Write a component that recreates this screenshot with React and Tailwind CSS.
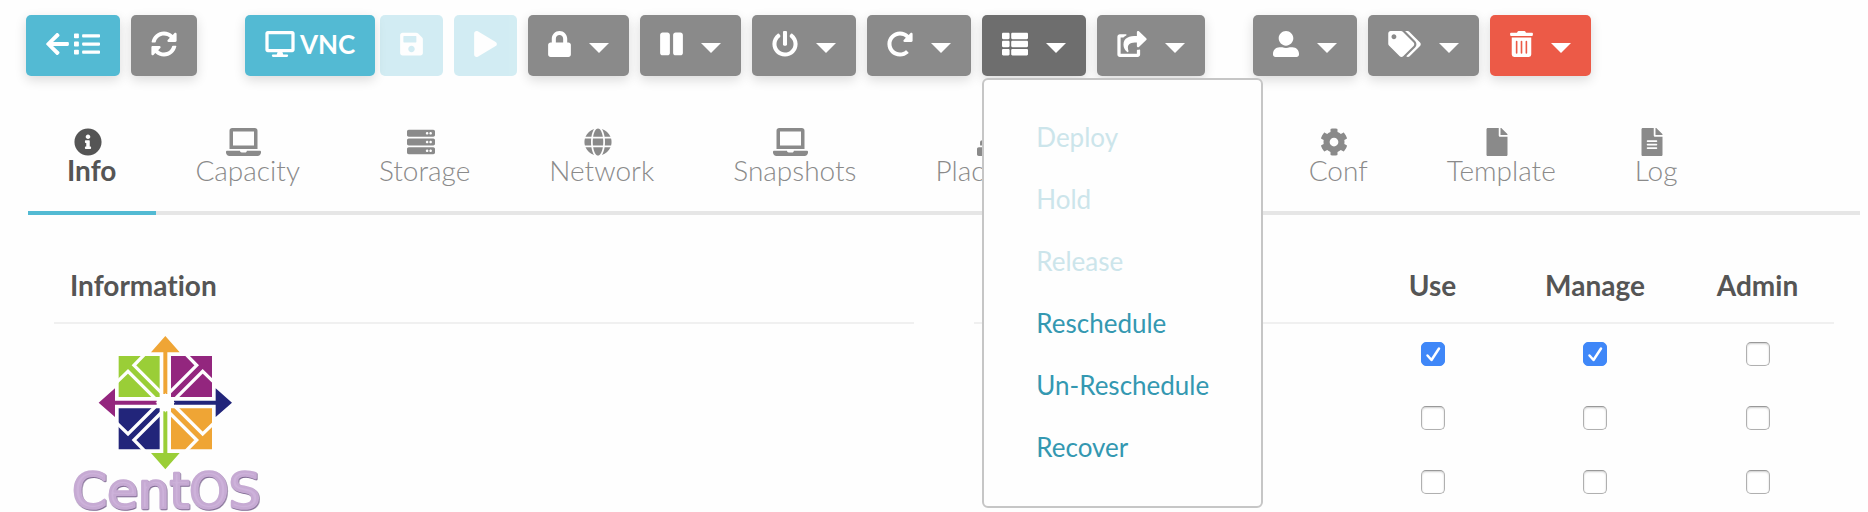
import React, { useState } from 'react';
import {
  FaArrowLeft,
  FaCog,
  FaDesktop,
  FaFile,
  FaFileAlt,
  FaGlobe,
  FaInfoCircle,
  FaLaptop,
  FaList,
  FaLock,
  FaPause,
  FaPlay,
  FaPowerOff,
  FaRedoAlt,
  FaSave,
  FaServer,
  FaShareSquare,
  FaSitemap,
  FaSyncAlt,
  FaTags,
  FaThList,
  FaTrashAlt,
  FaUserAlt,
} from 'react-icons/fa';

const TABS = [
  { id: 'info', label: 'Info', icon: FaInfoCircle },
  { id: 'capacity', label: 'Capacity', icon: FaLaptop, iconWidth: 'w-[35px]' },
  { id: 'storage', label: 'Storage', icon: FaServer },
  { id: 'network', label: 'Network', icon: FaGlobe },
  { id: 'snapshots', label: 'Snapshots', icon: FaLaptop, iconWidth: 'w-[35px]' },
  { id: 'placement', label: 'Placement', icon: FaSitemap, iconWidth: 'w-[35px]' },
  { id: 'actions', label: 'Actions', icon: FaList },
  { id: 'conf', label: 'Conf', icon: FaCog },
  { id: 'template', label: 'Template', icon: FaFile },
  { id: 'log', label: 'Log', icon: FaFileAlt },
];

const SCHEDULE_ACTIONS = [
  { label: 'Deploy', disabled: true },
  { label: 'Hold', disabled: true },
  { label: 'Release', disabled: true },
  { label: 'Reschedule' },
  { label: 'Un-Reschedule' },
  { label: 'Recover' },
];

const RIGHTS = ['Use', 'Manage', 'Admin'];

const App = () => {
  const [activeTab, setActiveTab] = useState('info');
  const [menuOpen, setMenuOpen] = useState(true);
  const [permissions, setPermissions] = useState({
    Owner: { Use: true, Manage: true, Admin: false },
    Group: { Use: false, Manage: false, Admin: false },
    Other: { Use: false, Manage: false, Admin: false },
  });

  const togglePermission = (who, right) => {
    setPermissions(prev => ({
      ...prev,
      [who]: { ...prev[who], [right]: !prev[who][right] },
    }));
  };

  return (
    <div className="bg-[#fefefe] min-h-screen font-['Lato',sans-serif] text-[#555] [font-variant-ligatures:none]">

      {/* TOOLBAR */}
      <header className="flex gap-12 pt-[15px] pl-[26px]">
        <div className="flex gap-[11px]">
          <ToolButton label="Back to list" color="primary">
            <span className="flex gap-[5px]">
              <FaArrowLeft className="h-[26px] w-[23px]" />
              <FaList className="h-[26px] w-[26px]" />
            </span>
          </ToolButton>
          <ToolButton label="Refresh" icon={FaSyncAlt} />
        </div>

        <div className="flex gap-[11px]">
          <div className="flex gap-[5px]">
            <ToolButton color="primary">
              <span className="flex gap-[5px] text-[26px] leading-[26px] font-bold">
                <FaDesktop className="h-[26px] w-[30px]" /> VNC
              </span>
            </ToolButton>
            <ToolButton label="Save" icon={FaSave} iconWidth="w-[23px]" color="primary" disabled />
          </div>
          <ToolButton label="Start" icon={FaPlay} iconWidth="w-[23px]" color="primary" disabled />
          <ToolButton label="Lock" icon={FaLock} iconWidth="w-[23px]" dropdown />
          <ToolButton label="Suspend" icon={FaPause} iconWidth="w-[23px]" dropdown />
          <ToolButton label="Power off" icon={FaPowerOff} dropdown />
          <ToolButton label="Reboot" icon={FaRedoAlt} dropdown />
          <div className="relative">
            <ToolButton
              label="Schedule"
              icon={FaThList}
              color={menuOpen ? 'pressed' : 'secondary'}
              dropdown
              onClick={() => setMenuOpen(!menuOpen)}
            />
            {menuOpen && (
              <ul className="absolute top-full left-0 z-10 mt-0.5 rounded-md border-2 border-[#c6c6c6] bg-[#fefefe] px-[52px] pt-[26px] pb-7">
                {SCHEDULE_ACTIONS.map(action => (
                  <li key={action.label}>
                    <button
                      type="button"
                      disabled={action.disabled}
                      className="block h-[62px] text-[26px] whitespace-nowrap text-[#3498b1] disabled:text-[#cce5eb]"
                    >
                      {action.label}
                    </button>
                  </li>
                ))}
              </ul>
            )}
          </div>
          <ToolButton label="Migrate" icon={FaShareSquare} iconWidth="w-[30px]" dropdown />
        </div>

        <div className="flex gap-[11px]">
          <ToolButton label="Owner" icon={FaUserAlt} dropdown />
          <ToolButton label="Labels" icon={FaTags} iconWidth="w-[33px]" dropdown />
          <ToolButton label="Terminate" icon={FaTrashAlt} iconWidth="w-[23px]" color="alert" dropdown />
        </div>
      </header>

      <main className="mt-[52px] mr-2 ml-7">
        {/* TABS */}
        <nav className="flex border-b-4 border-[#e6e6e6]">
          {TABS.map(tab => (
            <TabItem
              key={tab.id}
              icon={tab.icon}
              iconWidth={tab.iconWidth}
              label={tab.label}
              active={activeTab === tab.id}
              onClick={() => setActiveTab(tab.id)}
            />
          ))}
        </nav>

        {/* PANELS */}
        <div className="grid grid-cols-2 gap-[60px] px-[26px] pt-[35px]">
          <section>
            <h2 className="border-b-2 border-[#f0f0f0] px-4 pt-[21px] pb-[23px] text-[28px] leading-[28px] font-bold">
              Information
            </h2>
            <div className="px-4 pt-[11px]">
              <CentosLogo />
            </div>
          </section>

          <table className="w-full table-fixed border-separate border-spacing-0 self-start text-[28px] leading-[28px]">
            <thead>
              <tr>
                <th className="border-b-2 border-[#f0f0f0] px-4 pt-[21px] pb-[23px] text-left">Permissions</th>
                <th className="w-[153px] border-b-2 border-[#f0f0f0] pt-[21px] pb-[23px]">Use</th>
                <th className="w-[172px] border-b-2 border-[#f0f0f0] pt-[21px] pb-[23px]">Manage</th>
                <th className="w-[153px] border-b-2 border-[#f0f0f0] pt-[21px] pb-[23px]">Admin</th>
              </tr>
            </thead>
            <tbody>
              {Object.keys(permissions).map(who => (
                <tr key={who}>
                  <th className="px-4 text-left font-normal">{who}</th>
                  {RIGHTS.map(right => (
                    <td key={right} className="h-16 pb-1">
                      <Checkbox
                        label={`${who} ${right}`}
                        checked={permissions[who][right]}
                        onChange={() => togglePermission(who, right)}
                      />
                    </td>
                  ))}
                </tr>
              ))}
            </tbody>
          </table>
        </div>
      </main>
    </div>
  );
};

// --- SUB COMPONENTS ---

const BUTTON_COLORS = {
  primary: 'bg-[#53bad3]',
  secondary: 'bg-[#8a8a8a]',
  pressed: 'bg-[#6e6e6e]',
  alert: 'bg-[#ec5a47]',
};

const ToolButton = ({ label, icon: Icon, iconWidth = 'w-[26px]', color = 'secondary', dropdown, disabled, onClick, children }) => (
  <button
    type="button"
    aria-label={label}
    disabled={disabled}
    onClick={onClick}
    className={`flex gap-[18px] rounded-[5px] px-5 pt-4 pb-[19px] text-white ${BUTTON_COLORS[color]} ${
      disabled ? 'opacity-25' : 'shadow-[0_4px_12px_rgba(0,0,0,0.14)]'
    }`}
  >
    {Icon && <Icon className={`h-[26px] ${iconWidth}`} />}
    {children}
    {dropdown && (
      <svg viewBox="0 0 20 10" className="mb-1 h-[10px] w-5 self-end" fill="currentColor">
        <path d="M0 0h20L10 10z" />
      </svg>
    )}
  </button>
);

const TabItem = ({ icon: Icon, iconWidth = 'w-7', label, active, onClick }) => (
  <button
    type="button"
    onClick={onClick}
    className={`-mb-1 flex flex-col items-center border-b-4 pr-10 pb-[27px] pl-[39px] text-[28px] leading-[28px] ${
      active ? 'border-[#53bad3] font-bold text-[#555]' : 'border-transparent font-light text-[#8a8a8a]'
    }`}
  >
    <Icon className={`mr-2 h-7 ${iconWidth}`} />
    {label}
  </button>
);

const Checkbox = ({ label, checked, onChange }) => (
  <span className="relative mx-auto block size-6">
    <input
      type="checkbox"
      aria-label={label}
      checked={checked}
      onChange={onChange}
      className="block size-6 appearance-none rounded-[5px] border border-[#b0b0b0] border-t-[#999] bg-white shadow-[inset_0_1px_2px_rgba(0,0,0,0.2)] checked:border-[#3f87f8] checked:bg-[#3f87f8] checked:shadow-none"
    />
    {checked && (
      <svg viewBox="0 0 24 24" className="pointer-events-none absolute inset-0 size-6" fill="none" stroke="white" strokeWidth="2.5" strokeLinecap="round" strokeLinejoin="round">
        <path d="M6.500 13.500l4 4.500L18 6.500" />
      </svg>
    )}
  </span>
);

// One arrow and one square, repeated every quarter turn round the centre
const QUARTERS = [
  { angle: 0, arrow: '#efa535', square: '#9ace37' },
  { angle: 90, arrow: '#22257a', square: '#93267e' },
  { angle: 180, arrow: '#9ace37', square: '#efa535' },
  { angle: 270, arrow: '#93267e', square: '#22257a' },
];

const CentosLogo = () => (
  <svg viewBox="0 0 576 531" className="h-[177px] w-48 overflow-visible" role="img" aria-label="CentOS">
    <g transform="translate(286 203)">
      {QUARTERS.map(({ angle, arrow, square }) => (
        <g key={angle} transform={`rotate(${angle})`}>
          <path d="M-140-140h123v123h-123z" fill={square} />
          <path d="M-60-147L-94-112L-10-28M-147-60L-112-94L-28-10" fill="none" stroke="#fefefe" strokeWidth="10" />
          <path d="M0-200L43-151H6V-26H-6V-151H-43z" fill={arrow} />
        </g>
      ))}
      <path d="M0-30L8-8L30 0L8 8L0 30L-8 8L-30 0L-8-8z" fill="#fefefe" />
      <circle r="20" fill="#fefefe" />
    </g>
    <text
      x="7"
      y="520"
      fontFamily="DejaVu Sans"
      fontSize="150"
      fill="#cdb2da"
      stroke="#c6aad3"
      strokeWidth="8"
      strokeLinejoin="round"
      className="drop-shadow-[2px_3px_2px_#7f6a92]"
    >
      CentOS
    </text>
  </svg>
);

export default App;
